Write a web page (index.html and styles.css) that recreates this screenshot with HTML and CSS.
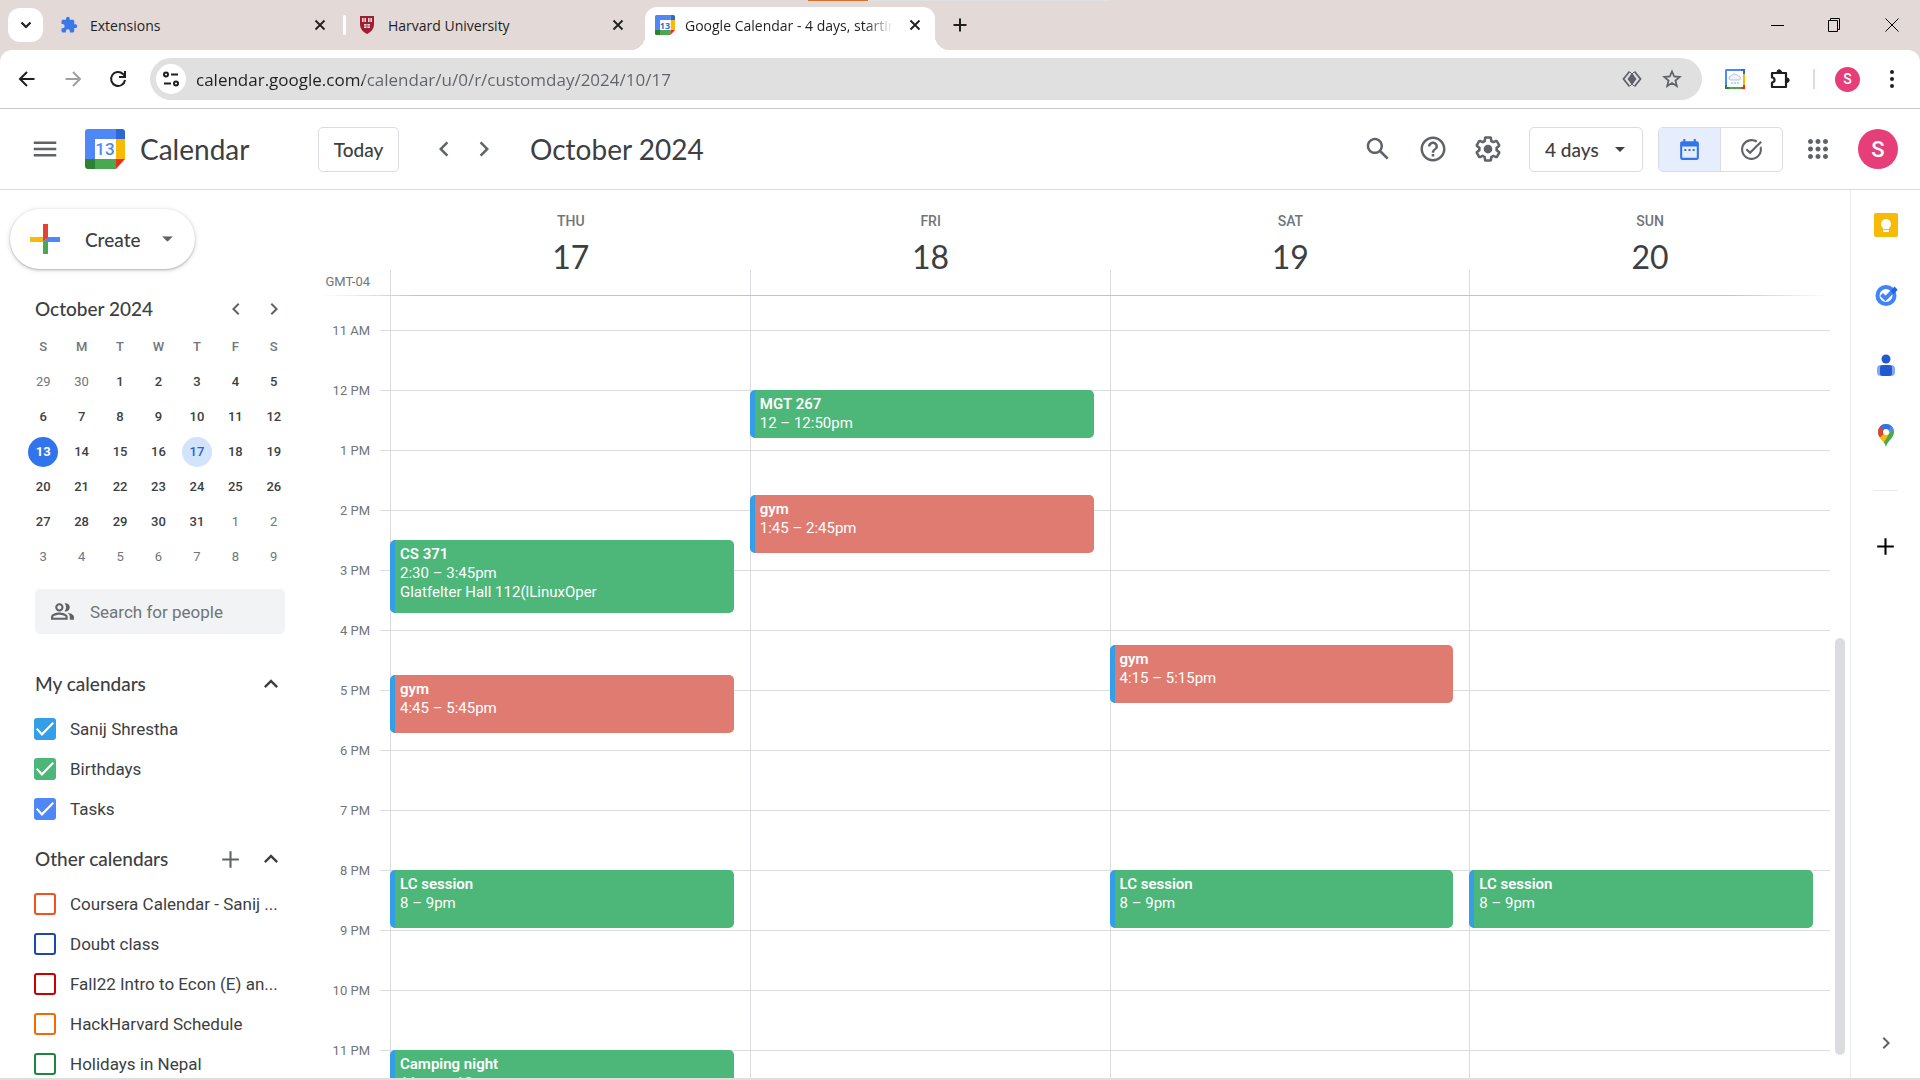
FILE: index.html
```html
<!DOCTYPE html>
<html lang="en">
<head>
    <meta charset="UTF-8">
    <meta name="viewport" content="width=device-width, initial-scale=1.0">
    <title>Google Calendar - 4 days, starting Thursday, October 17, 2024</title>
    <link rel="stylesheet" href="styles.css">
</head>
<body>

    <!-- Shared icons -->
    <svg class="sprite" aria-hidden="true">
        <symbol id="i-close" viewBox="0 0 16 16"><path d="M3.5 3.5l9 9M12.5 3.5l-9 9" fill="none" stroke="currentColor" stroke-width="1.8"/></symbol>
        <symbol id="i-left" viewBox="0 0 24 24"><path d="M15.41 7.41L14 6l-6 6 6 6 1.41-1.41L10.83 12z"/></symbol>
        <symbol id="i-right" viewBox="0 0 24 24"><path d="M10 6L8.59 7.41 13.17 12l-4.58 4.59L10 18l6-6z"/></symbol>
        <symbol id="i-up" viewBox="0 0 24 24"><path d="M12 8l-6 6 1.41 1.41L12 10.83l4.59 4.58L18 14z"/></symbol>
        <symbol id="i-caret" viewBox="0 0 10 5"><path d="M0 0h10L5 5z"/></symbol>
        <symbol id="i-plus" viewBox="0 0 24 24"><path d="M20 13h-7v7h-2v-7H4v-2h7V4h2v7h7v2z"/></symbol>
        <symbol id="i-calendar-logo" viewBox="0 0 40 40">
            <path d="M3 0h28v10H10v20H0V3a3 3 0 0 1 3-3z" fill="#4f87f7"/>
            <path d="M31 0h6a3 3 0 0 1 3 3v7h-9z" fill="#2c67d3"/>
            <path d="M31 10h9v20h-9z" fill="#f7bb07"/>
            <path d="M10 30h21v10H10z" fill="#4aa850"/>
            <path d="M0 30h10v10H3a3 3 0 0 1-3-3z" fill="#2f8132"/>
            <path d="M31 30h9l-9 10z" fill="#ee2c1e"/>
            <path d="M10 10h21v20H10z" fill="#fff"/>
        </symbol>
    </svg>

    <!-- Browser window -->
    <header class="browser">
        <div class="load-bar"></div>
        <div class="tab-strip">
            <button class="tab-search" aria-label="Search tabs">
                <svg width="16" height="16" viewBox="0 0 16 16"><path d="M3.5 5.5L8 10l4.5-4.5" fill="none" stroke="#1f1f1f" stroke-width="2.2"/></svg>
            </button>
            <div class="tab">
                <svg class="favicon" viewBox="0 0 24 24" fill="#3b78e7"><path d="M20.5 11H19V7c0-1.1-.9-2-2-2h-4V3.500a2.500 2.500 0 0 0-5 0V5H4c-1.100 0-2 .9-2 2v3.800h1.500a2.700 2.700 0 0 1 0 5.400H2V20c0 1.100.9 2 2 2h3.800v-1.500a2.700 2.700 0 0 1 5.400 0V22H17c1.100 0 2-.9 2-2v-4h1.500a2.500 2.500 0 0 0 0-5z"/></svg>
                <span class="tab-title">Extensions</span>
                <button class="tab-close" aria-label="Close tab"><svg width="16" height="16"><use href="#i-close"/></svg></button>
            </div>
            <span class="tab-divider"></span>
            <div class="tab">
                <svg class="favicon" viewBox="0 0 18 20">
                    <path d="M2 1h14v8c0 5-3 8-7 10-4-2-7-5-7-10z" fill="#a51c30"/>
                    <g fill="#e9d6d6"><path d="M4 3h4v4H4zM10 3h4v4h-4zM6 9h6v4H6z"/></g>
                    <path d="M6 3v4M12 3v4M9 9v4M6 11h6" stroke="#8d6470" stroke-width="1"/>
                </svg>
                <span class="tab-title">Harvard University</span>
                <button class="tab-close" aria-label="Close tab"><svg width="16" height="16"><use href="#i-close"/></svg></button>
            </div>
            <div class="tab active">
                <span class="favicon-cal"><svg width="20" height="20"><use href="#i-calendar-logo"/></svg><b>13</b></span>
                <span class="tab-title fade">Google Calendar - 4 days, starting</span>
                <button class="tab-close" aria-label="Close tab"><svg width="16" height="16"><use href="#i-close"/></svg></button>
            </div>
            <button class="new-tab" aria-label="New tab"><svg width="16" height="16" viewBox="0 0 16 16"><path d="M8 1.5v13M1.500 8h13" stroke="#1f1f1f" stroke-width="2"/></svg></button>
            <div class="window-buttons">
                <button aria-label="Minimize"><svg width="14" height="14"><path d="M0 7.5h13" stroke="#000"/></svg></button>
                <button aria-label="Restore"><svg width="14" height="14" fill="none" stroke="#000"><path d="M.5 2.500h9v11h-9zM2.500 2V.5h9v11H10"/></svg></button>
                <button aria-label="Close"><svg width="14" height="14"><path d="M.5.5l13 13M13.500.5l-13 13" stroke="#000"/></svg></button>
            </div>
        </div>

        <div class="toolbar">
            <button class="nav" aria-label="Back"><svg width="20" height="20" viewBox="0 0 20 20" fill="none" stroke="#1f1f1f" stroke-width="2"><path d="M17.500 10H4M10 3l-7 7 7 7"/></svg></button>
            <button class="nav" aria-label="Forward"><svg width="20" height="20" viewBox="0 0 20 20" fill="none" stroke="#a0a0a0" stroke-width="2"><path d="M2.500 10H16M10 3l7 7-7 7"/></svg></button>
            <button class="nav" aria-label="Reload"><svg width="20" height="20" viewBox="0 0 20 20" fill="none" stroke="#1f1f1f" stroke-width="2"><path d="M16 11a7 7 0 1 1-2-6l2 2M16 2v6h-6"/></svg></button>
            <div class="address">
                <button class="site-info" aria-label="View site information"><svg width="18" height="18" viewBox="0 0 18 18" fill="none" stroke="#1f1f1f" stroke-width="2"><circle cx="4" cy="4.500" r="2"/><path d="M9 4.500h7M2 13.500h7"/><circle cx="14" cy="13.500" r="2"/></svg></button>
                <input class="url" type="text" aria-label="Address" value="calendar.google.com/calendar/u/0/r/customday/2024/10/17">
                <button class="in-address" aria-label="Hidden content"><svg width="20" height="20" viewBox="0 0 20 20" fill="none" stroke="#5f6368" stroke-width="1.800"><path d="M7.500 2.500L1.500 10l6 7.500M12.500 2.500l6 7.500-6 7.500"/><path d="M10 4l4.500 6-4.500 6-4.500-6z" fill="#5f6368" stroke="none"/><path d="M8 3l4 4M12 3L8 7M8 17l4-4M12 17l-4-4" stroke-width="1"/></svg></button>
                <button class="in-address" aria-label="Bookmark"><svg width="20" height="20" viewBox="0 0 20 20" fill="none" stroke="#5f6368" stroke-width="1.800"><path d="M10 2.500l2.200 5 5.500.5-4.200 3.600 1.300 5.400-4.800-2.900L5.200 17l1.300-5.400L2.300 8l5.500-.5z"/></svg></button>
            </div>
            <button class="tool" aria-label="Weather extension">
                <svg width="20" height="20" viewBox="0 0 20 20"><path d="M1 0h15v2H2v14H0V1z" fill="#4f87f7"/><path d="M16 0h4v5h-2V2h-2z" fill="#2c67d3"/><path d="M18 5h2v11h-2z" fill="#f7bb07"/><path d="M4 18h12v2H4z" fill="#4aa850"/><path d="M0 16h2v2h2v2H0z" fill="#2f8132"/><path d="M18 16h2v4h-4v-2h2z" fill="#ee2c1e"/><path d="M6 11a2 2 0 0 1 0-4 4 4 0 0 1 7 0 2 2 0 0 1 1 4z" fill="#eef1f5" stroke="#b9c3d0"/><path d="M7 13v2M10 13v2M13 13v2" stroke="#5fb4ef"/></svg>
            </button>
            <button class="tool" aria-label="Extensions"><svg width="22" height="22" viewBox="0 0 22 22"><path d="M3 5h14v14H3v-4.500a2.500 2.500 0 0 0 0-5z" fill="none" stroke="#1f1f1f" stroke-width="2.200" stroke-linejoin="round"/><path d="M8 4a2.200 2.200 0 0 1 4.400 0zM18 10a2.200 2.200 0 0 1 0 4.400z" fill="#1f1f1f" stroke="#1f1f1f"/></svg></button>
            <span class="tool-divider"></span>
            <button class="avatar small" aria-label="Profile">S</button>
            <button class="tool" aria-label="Menu"><svg width="20" height="20" viewBox="0 0 20 20" fill="#1f1f1f"><circle cx="10" cy="3" r="2"/><circle cx="10" cy="10" r="2"/><circle cx="10" cy="17" r="2"/></svg></button>
        </div>
    </header>

    <!-- Calendar header -->
    <header class="app-bar">
        <button class="icon-btn" aria-label="Main menu"><svg width="30" height="30" viewBox="0 0 24 24"><path d="M3 18h18v-2H3v2zm0-5h18v-2H3v2zm0-7v2h18V6H3z"/></svg></button>
        <a class="brand" href="#">
            <span class="logo"><svg width="40" height="40"><use href="#i-calendar-logo"/></svg><b>13</b></span>
            <span class="brand-name">Calendar</span>
        </a>
        <button class="today">Today</button>
        <div class="pager">
            <button aria-label="Previous 4 days"><svg width="30" height="30"><use href="#i-left"/></svg></button>
            <button aria-label="Next 4 days"><svg width="30" height="30"><use href="#i-right"/></svg></button>
        </div>
        <h1>October 2024</h1>
        <div class="actions">
            <button class="icon-btn" aria-label="Search"><svg width="30" height="30" viewBox="0 0 24 24"><path d="M20.490 19l-5.730-5.730C15.530 12.200 16 10.910 16 9.500 16 5.910 13.090 3 9.500 3S3 5.910 3 9.500 5.910 16 9.500 16c1.410 0 2.700-.47 3.770-1.240L19 20.490 20.490 19zM5 9.500C5 7.010 7.010 5 9.500 5S14 7.010 14 9.500 11.990 14 9.500 14 5 11.990 5 9.500z"/></svg></button>
            <button class="icon-btn" aria-label="Help"><svg width="30" height="30" viewBox="0 0 24 24"><path d="M11 18h2v-2h-2v2zm1-16C6.480 2 2 6.480 2 12s4.480 10 10 10 10-4.480 10-10S17.520 2 12 2zm0 18c-4.410 0-8-3.590-8-8s3.590-8 8-8 8 3.590 8 8-3.590 8-8 8zm0-14c-2.210 0-4 1.790-4 4h2c0-1.100.9-2 2-2s2 .9 2 2c0 2-3 1.750-3 5h2c0-2.250 3-2.500 3-5 0-2.210-1.790-4-4-4z"/></svg></button>
            <button class="icon-btn" aria-label="Settings"><svg width="30" height="30" viewBox="0 0 24 24"><path d="M13.850 22.250h-3.700c-.74 0-1.360-.54-1.450-1.270l-.27-1.890c-.27-.14-.53-.29-.79-.46l-1.800.72c-.7.26-1.470-.03-1.810-.65L2.200 15.530c-.35-.66-.2-1.440.36-1.880l1.530-1.190c-.01-.15-.02-.3-.02-.46 0-.15.01-.31.02-.46l-1.520-1.190c-.59-.45-.74-1.260-.37-1.880l1.850-3.190c.34-.62 1.110-.9 1.790-.63l1.810.73c.26-.17.52-.32.78-.46l.27-1.910c.09-.7.71-1.250 1.440-1.250h3.700c.74 0 1.360.54 1.450 1.270l.27 1.890c.27.14.53.29.79.46l1.800-.72c.71-.26 1.480.03 1.820.65l1.840 3.180c.36.66.2 1.440-.36 1.880l-1.520 1.190c.01.15.02.3.02.46s-.01.31-.02.46l1.520 1.190c.56.45.72 1.230.37 1.860l-1.860 3.220c-.34.62-1.110.9-1.800.63l-1.800-.72c-.26.17-.52.32-.78.46l-.27 1.910c-.1.68-.72 1.220-1.460 1.220zm-3.230-2h2.760l.37-2.550.53-.22c.44-.18.88-.44 1.340-.78l.45-.34 2.380.96 1.380-2.400-2.030-1.580.07-.56c.03-.26.06-.51.06-.78s-.03-.53-.06-.78l-.07-.56 2.030-1.580-1.390-2.400-2.390.96-.45-.35c-.42-.32-.87-.58-1.330-.77l-.52-.22-.37-2.550h-2.760l-.37 2.550-.53.21c-.44.19-.88.44-1.340.79l-.45.33-2.380-.95-1.390 2.390 2.030 1.580-.07.56a7 7 0 0 0-.06.79c0 .26.02.53.06.78l.07.56-2.030 1.580 1.380 2.400 2.390-.96.45.35c.43.33.86.58 1.330.77l.53.22z"/><circle cx="12" cy="12" r="3.500"/></svg></button>
            <label class="view-picker">
                <select aria-label="View"><option>4 days</option><option>Day</option><option>Week</option><option>Month</option></select>
                <svg width="10" height="5"><use href="#i-caret"/></svg>
            </label>
            <div class="mode">
                <button class="on" aria-label="Switch to Calendar"><svg width="25" height="25" viewBox="0 0 24 24"><path d="M19 4h-1V2h-2v2H8V2H6v2H5c-1.110 0-2 .9-2 2v14c0 1.100.89 2 2 2h14c1.100 0 2-.9 2-2V6c0-1.100-.9-2-2-2zm0 16H5V9h14z"/><path d="M7 11.500h2v2H7zM11 11.500h2v2h-2zM15 11.500h2v2h-2z"/></svg></button>
                <button aria-label="Switch to Tasks"><svg width="25" height="25" viewBox="0 0 24 24"><path d="M22 5.180L10.590 16.600l-4.240-4.240 1.410-1.410 2.830 2.830 10-10L22 5.180zm-2.210 5.040c.13.57.21 1.170.21 1.780 0 4.420-3.580 8-8 8s-8-3.580-8-8 3.580-8 8-8c1.580 0 3.040.46 4.280 1.250l1.440-1.440C16.100 2.670 14.130 2 12 2 6.480 2 2 6.480 2 12s4.480 10 10 10 10-4.480 10-10c0-1.190-.22-2.330-.6-3.390l-1.610 1.610z"/></svg></button>
            </div>
            <button class="icon-btn apps" aria-label="Google apps"><svg width="30" height="30" viewBox="0 0 24 24"><path d="M6 8c1.100 0 2-.9 2-2s-.9-2-2-2-2 .9-2 2 .9 2 2 2zm6 12c1.100 0 2-.9 2-2s-.9-2-2-2-2 .9-2 2 .9 2 2 2zm-6 0c1.100 0 2-.9 2-2s-.9-2-2-2-2 .9-2 2 .9 2 2 2zm0-6c1.100 0 2-.9 2-2s-.9-2-2-2-2 .9-2 2 .9 2 2 2zm6 0c1.100 0 2-.9 2-2s-.9-2-2-2-2 .9-2 2 .9 2 2 2zm4-8c0 1.100.9 2 2 2s2-.9 2-2-.9-2-2-2-2 .9-2 2zm-4 2c1.100 0 2-.9 2-2s-.9-2-2-2-2 .9-2 2 .9 2 2 2zm6 6c1.100 0 2-.9 2-2s-.9-2-2-2-2 .9-2 2 .9 2 2 2zm0 6c1.100 0 2-.9 2-2s-.9-2-2-2-2 .9-2 2 .9 2 2 2z"/></svg></button>
            <button class="avatar" aria-label="Google Account">S</button>
        </div>
    </header>

    <div class="content">

        <!-- Left sidebar -->
        <aside class="sidebar">
            <button class="create">
                <svg width="30" height="30" viewBox="0 0 30 30"><path d="M13 0h5v15h-5z" fill="#e04433"/><path d="M0 13h13v5H0z" fill="#f7bb07"/><path d="M18 13h12v5H18z" fill="#4f87f7"/><path d="M13 18h5v12h-5z" fill="#4aa850"/><path d="M18 13v5h-5z" fill="#4f87f7"/><path d="M13 13h5l-5 5z" fill="#e04433"/></svg>
                <span>Create</span>
                <svg class="create-caret" width="11" height="6" viewBox="0 0 10 5"><use href="#i-caret"/></svg>
            </button>

            <div class="mini-head">
                <h2>October 2024</h2>
                <button aria-label="Previous month"><svg width="24" height="24"><use href="#i-left"/></svg></button>
                <button aria-label="Next month"><svg width="24" height="24"><use href="#i-right"/></svg></button>
            </div>
            <table class="mini">
                <thead>
                    <tr><th>S</th><th>M</th><th>T</th><th>W</th><th>T</th><th>F</th><th>S</th></tr>
                </thead>
                <tbody>
                    <tr><td class="out">29</td><td class="out">30</td><td>1</td><td>2</td><td>3</td><td>4</td><td>5</td></tr>
                    <tr><td>6</td><td>7</td><td>8</td><td>9</td><td>10</td><td>11</td><td>12</td></tr>
                    <tr><td><span class="now">13</span></td><td>14</td><td>15</td><td>16</td><td><span class="picked">17</span></td><td>18</td><td>19</td></tr>
                    <tr><td>20</td><td>21</td><td>22</td><td>23</td><td>24</td><td>25</td><td>26</td></tr>
                    <tr><td>27</td><td>28</td><td>29</td><td>30</td><td>31</td><td class="out">1</td><td class="out">2</td></tr>
                    <tr><td class="out">3</td><td class="out">4</td><td class="out">5</td><td class="out">6</td><td class="out">7</td><td class="out">8</td><td class="out">9</td></tr>
                </tbody>
            </table>

            <label class="people">
                <svg width="25" height="25" viewBox="0 0 24 24"><path fill-rule="evenodd" d="M9 4a4 4 0 1 1 0 8 4 4 0 0 1 0-8zm0 2a2 2 0 1 0 0 4 2 2 0 0 0 0-4zM9 13c2.670 0 8 1.340 8 4v3H1v-3c0-2.660 5.330-4 8-4zm0 2c-2.700 0-5.800 1.290-6 2.010V18h12v-1c-.2-.71-3.300-2-6-2zM14 4.100c.3-.1.700-.1 1-.1a4 4 0 0 1 0 8c-.3 0-.7 0-1-.1a5.900 5.900 0 0 0 0-7.800zM16.700 13.100C19.400 13.500 23 14.800 23 17v3h-4v-3c0-1.700-1-2.900-2.300-3.900z"/></svg>
                <input type="text" placeholder="Search for people" aria-label="Search for people">
            </label>

            <div class="list-head">
                <h3>My calendars</h3>
                <button aria-label="Collapse"><svg width="28" height="28"><use href="#i-up"/></svg></button>
            </div>
            <ul class="calendars">
                <li><label><input class="sky" type="checkbox" checked><span>Sanij Shrestha</span></label></li>
                <li><label><input class="mint" type="checkbox" checked><span>Birthdays</span></label></li>
                <li><label><input class="azure" type="checkbox" checked><span>Tasks</span></label></li>
            </ul>

            <div class="list-head second">
                <h3>Other calendars</h3>
                <button class="add" aria-label="Add other calendars"><svg width="25" height="25"><use href="#i-plus"/></svg></button>
                <button aria-label="Collapse"><svg width="28" height="28"><use href="#i-up"/></svg></button>
            </div>
            <ul class="calendars">
                <li><label><input class="orange" type="checkbox"><span>Coursera Calendar - Sanij ...</span></label></li>
                <li><label><input class="navy" type="checkbox"><span>Doubt class</span></label></li>
                <li><label><input class="red" type="checkbox"><span>Fall22 Intro to Econ (E) an...</span></label></li>
                <li><label><input class="amber" type="checkbox"><span>HackHarvard Schedule</span></label></li>
                <li><label><input class="forest" type="checkbox"><span>Holidays in Nepal</span></label></li>
            </ul>
        </aside>

        <!-- Four day view -->
        <main class="view">
            <div class="day-heads">
                <div class="zone">GMT-04</div>
                <div class="day-head"><span>THU</span><strong>17</strong></div>
                <div class="day-head"><span>FRI</span><strong>18</strong></div>
                <div class="day-head"><span>SAT</span><strong>19</strong></div>
                <div class="day-head"><span>SUN</span><strong>20</strong></div>
            </div>
            <div class="rule"></div>
            <div class="schedule">
                <div class="hours">
                    <span>11 AM</span><span>12 PM</span><span>1 PM</span><span>2 PM</span><span>3 PM</span><span>4 PM</span><span>5 PM</span>
                    <span>6 PM</span><span>7 PM</span><span>8 PM</span><span>9 PM</span><span>10 PM</span><span>11 PM</span>
                </div>
                <!-- one grid row = 5 minutes, row 1 = 11 AM -->
                <div class="days">
                    <div class="day">
                        <div class="event green" style="grid-row: 43 / span 15"><b>CS 371</b><span>2:30 – 3:45pm</span><span>Glatfelter Hall 112(lLinuxOper</span></div>
                        <div class="event coral" style="grid-row: 70 / span 12"><b>gym</b><span>4:45 – 5:45pm</span></div>
                        <div class="event green" style="grid-row: 109 / span 12"><b>LC session</b><span>8 – 9pm</span></div>
                        <div class="event green" style="grid-row: 145 / span 12"><b>Camping night</b><span>11pm – 12am</span></div>
                    </div>
                    <div class="day">
                        <div class="event green" style="grid-row: 13 / span 10"><b>MGT 267</b><span>12 – 12:50pm</span></div>
                        <div class="event coral" style="grid-row: 34 / span 12"><b>gym</b><span>1:45 – 2:45pm</span></div>
                    </div>
                    <div class="day">
                        <div class="event coral" style="grid-row: 64 / span 12"><b>gym</b><span>4:15 – 5:15pm</span></div>
                        <div class="event green" style="grid-row: 109 / span 12"><b>LC session</b><span>8 – 9pm</span></div>
                    </div>
                    <div class="day">
                        <div class="event green" style="grid-row: 109 / span 12"><b>LC session</b><span>8 – 9pm</span></div>
                    </div>
                </div>
                <div class="scroll-track"><div class="scroll-thumb"></div></div>
            </div>
        </main>

        <!-- Right side panel -->
        <nav class="side-panel">
            <button aria-label="Keep"><svg width="24" height="24" viewBox="0 0 24 24"><rect width="24" height="24" rx="2" fill="#f7bb07"/><circle cx="12" cy="11" r="5" fill="#fff"/><path d="M9 13h6v3H9zM9 17h6v2H9z" fill="#fff"/></svg></button>
            <button aria-label="Tasks"><svg width="24" height="24" viewBox="0 0 24 24"><circle cx="12" cy="12.500" r="8.500" fill="none" stroke="#3f84fb" stroke-width="4"/><path d="M7.500 11.500l4 4L22 5" fill="none" stroke="#3f84fb" stroke-width="4"/><path d="M16.500 8l4-4 3 3-4 4z" fill="#2763d6"/></svg></button>
            <button aria-label="Contacts"><svg width="24" height="24" viewBox="0 0 24 24"><rect x="3" y="12" width="18" height="11" rx="4" fill="#82a8f8"/><circle cx="12" cy="6" r="4.500" fill="#2259cf"/><rect x="6" y="12" width="12" height="11" rx="3" fill="#2259cf"/></svg></button>
            <button aria-label="Maps"><svg width="24" height="24" viewBox="0 0 24 24">
                <clipPath id="pin"><path d="M12 1a8 8 0 0 1 8 8c0 6-6 8-8 15-2-7-8-9-8-15a8 8 0 0 1 8-8z"/></clipPath>
                <g clip-path="url(#pin)"><path d="M0 0h24v24H0z" fill="#4aa850"/><path d="M4 16L18 2v4L9 21z" fill="#f7bb07"/><path d="M0 0h8l4 9-8 7z" fill="#e04433"/><path d="M6 4l3-4h15L13 9z" fill="#2f74e8"/><path d="M22 0v6L12 10l6-8z" fill="#4f87f7"/></g>
                <circle cx="12" cy="9" r="3" fill="#fff"/></svg></button>
            <hr>
            <button class="get" aria-label="Get add-ons"><svg width="25" height="25"><use href="#i-plus"/></svg></button>
            <button class="hide" aria-label="Hide side panel"><svg width="24" height="24"><use href="#i-right"/></svg></button>
        </nav>
    </div>
    <div class="window-edge"></div>

</body>
</html>
```
FILE: styles.css
```css
/* General styling */
* {
    box-sizing: border-box;
}

body, html {
    margin: 0;
    height: 100%;
}

body {
    display: flex;
    flex-direction: column;
    overflow: hidden;
    background: #fff;
    color: #3c4043;
    font-family: Roboto, Arial, sans-serif;
    font-size: 17px;
}

button, input, select {
    font: inherit;
    color: inherit;
    border: none;
    background: none;
    padding: 0;
    margin: 0;
    outline: none;
}

button {
    display: flex;
    align-items: center;
    justify-content: center;
    flex-shrink: 0;
    cursor: pointer;
}

svg {
    flex-shrink: 0;
}

svg:not([fill]) {
    fill: currentColor;
}

h1, h2, h3 {
    margin: 0;
    font-family: Lato, sans-serif;
    font-weight: 400;
}

.sprite {
    position: absolute;
    width: 0;
    height: 0;
}

/* Browser tabs */
.browser {
    flex-shrink: 0;
    background: #e3dad7;
    color: #1f1f1f;
    font-family: "Open Sans", sans-serif;
    font-size: 14px;
}

.load-bar {
    position: absolute;
    top: 0;
    left: 42.1%;
    width: 301px;
    height: 1px;
    background: linear-gradient(90deg, #d4722a 60px, #dfe0df 60px);
}

.tab-strip {
    display: flex;
    align-items: center;
    height: 50px;
    padding-left: 8px;
}

.tab-search {
    width: 35px;
    height: 34px;
    margin-right: 8px;
    border-radius: 12px;
    background: #fff;
}

.tab {
    display: flex;
    align-items: center;
    width: 289px;
    padding: 0 12px 0 9px;
}

.tab-divider {
    width: 3px;
    height: 20px;
    margin: 0 3px;
    background: #fff;
    border-radius: 2px;
}

.favicon {
    width: 18px;
    height: 20px;
    margin-right: 12px;
}

.favicon-cal, .logo {
    display: grid;
    place-items: center;
    flex-shrink: 0;
}

.favicon-cal > *, .logo > * {
    grid-area: 1 / 1;
}

.favicon-cal {
    margin-right: 10px;
}

.favicon-cal b {
    color: #2f6fe4;
    font-size: 9px;
}

.tab-title {
    flex: 1;
    overflow: hidden;
    white-space: nowrap;
}

.tab-title.fade {
    -webkit-mask-image: linear-gradient(90deg, #000 180px, transparent 208px);
    mask-image: linear-gradient(90deg, #000 180px, transparent 208px);
}

.tab-close {
    width: 16px;
    height: 16px;
    margin-left: 10px;
}

.tab.active {
    position: relative;
    align-self: flex-end;
    width: 290px;
    height: 43px;
    margin-left: 7px;
    padding: 0 12px 7px 10px;
    border-radius: 12px 12px 0 0;
    background: #fff;
}

/* flared feet of the active tab */
.tab.active::before, .tab.active::after {
    content: "";
    position: absolute;
    bottom: 0;
    width: 14px;
    height: 14px;
}

.tab.active::before {
    right: 100%;
    background: radial-gradient(circle at 0 0, transparent 14px, #fff 14px);
}

.tab.active::after {
    left: 100%;
    background: radial-gradient(circle at 100% 0, transparent 14px, #fff 14px);
}

.new-tab {
    width: 34px;
    height: 34px;
    margin-left: 8px;
}

.window-buttons {
    display: flex;
    margin-left: auto;
}

.window-buttons button {
    width: 57px;
    height: 48px;
}

/* Address bar */
.toolbar {
    display: flex;
    align-items: center;
    height: 59px;
    padding: 0 8px 0 4px;
    background: #fff;
    border-bottom: 1px solid #c8c8c8;
    border-radius: 12px 12px 0 0;
}

.nav {
    width: 46px;
    height: 40px;
}

.address {
    display: flex;
    align-items: center;
    flex: 1;
    height: 42px;
    margin: 0 13px 0 8px;
    padding: 0 10px 0 6px;
    border-radius: 21px;
    background: #e0e0e0;
}

.site-info {
    width: 30px;
    height: 30px;
    margin-right: 10px;
    border-radius: 50%;
    background: #fff;
}

/* host name darker than the rest of the address */
.url {
    flex: 1;
    min-width: 0;
    height: 30px;
    font-size: 17px;
    color: transparent;
    background: linear-gradient(90deg, #1f1f1f 167px, #5f6368 167px);
    -webkit-background-clip: text;
    background-clip: text;
}

.in-address {
    width: 40px;
    height: 40px;
}

.tool {
    width: 40px;
    height: 40px;
}

.tool + .tool {
    margin-left: 5px;
}

.tool-divider {
    width: 2px;
    height: 20px;
    margin: 0 20px 0 13px;
    background: #e3dad7;
}

.avatar {
    width: 40px;
    height: 40px;
    border-radius: 50%;
    background: #e53e78;
    color: #fff;
    font-family: Roboto, sans-serif;
    font-weight: 500;
    font-size: 22px;
}

.avatar.small {
    width: 25px;
    height: 25px;
    margin-right: 12px;
    font-size: 14px;
}

/* Calendar header */
.app-bar {
    display: flex;
    align-items: center;
    flex-shrink: 0;
    height: 81px;
    padding: 0 22px 0 20px;
    border-bottom: 1px solid #dadce0;
}

.icon-btn {
    width: 50px;
    height: 50px;
    color: #5f6368;
}

.brand {
    display: flex;
    align-items: center;
    gap: 15px;
    width: 248px;
    padding-left: 15px;
    color: inherit;
    text-decoration: none;
}

.logo b {
    color: #4f87f7;
    font-size: 17px;
    font-weight: 500;
}

.brand-name, h1 {
    font-family: Lato, sans-serif;
    font-size: 28px;
    line-height: 36px;
}

.today {
    width: 81px;
    height: 45px;
    border: 1px solid #dadce0;
    border-radius: 5px;
    font-family: Lato, sans-serif;
    font-size: 19px;
    font-weight: 500;
}

.pager {
    display: flex;
    margin: 0 26px 0 25px;
    color: #5f6368;
}

.pager button {
    width: 40px;
    height: 40px;
}

.actions {
    display: flex;
    align-items: center;
    margin-left: auto;
}

.actions .icon-btn {
    width: 55px;
}

.actions .apps {
    width: 50px;
    margin: 0 15px 0 10px;
}

.view-picker {
    display: flex;
    align-items: center;
    width: 114px;
    height: 45px;
    margin: 0 15px 0 14px;
    padding: 0 17px 0 15px;
    border: 1px solid #dadce0;
    border-radius: 5px;
}

.view-picker select {
    flex: 1;
    min-width: 0;
    appearance: none;
    font-family: Lato, sans-serif;
    font-size: 19px;
    font-weight: 500;
}

.mode {
    display: flex;
    width: 125px;
    height: 45px;
    border: 1px solid #dadce0;
    border-radius: 5px;
    overflow: hidden;
    color: #5f6368;
}

.mode button {
    flex: 1;
}

.mode .on {
    background: #e6edfd;
    border-right: 1px solid #dadce0;
    color: #3174ec;
}

/* Page columns */
.content {
    display: flex;
    flex: 1;
    min-height: 0;
}

.sidebar {
    flex-shrink: 0;
    width: 320px;
    padding: 19px 27px 0 24px;
    overflow: hidden;
}

.create {
    width: 185px;
    height: 60px;
    margin-left: -14px;
    padding: 0 22px 0 20px;
    justify-content: flex-start;
    border-radius: 30px;
    background: #fff;
    box-shadow: 0 1px 2px rgba(60, 64, 67, 0.3), 0 1px 4px 1px rgba(60, 64, 67, 0.15);
    font-family: Lato, sans-serif;
    font-size: 19px;
    font-weight: 500;
}

.create span {
    margin-left: 25px;
}

.create-caret {
    margin-left: auto;
    color: #5f6368;
}

.mini-head {
    display: flex;
    align-items: center;
    height: 30px;
    margin-top: 25px;
    padding-left: 11px;
}

.mini-head h2, .list-head h3 {
    flex: 1;
    padding-bottom: 2px;
    font-size: 19px;
    font-weight: 500;
}

.mini-head button {
    width: 38px;
    height: 30px;
    color: #5f6368;
}

.mini {
    width: 100%;
    margin-top: 5px;
    border-collapse: collapse;
    table-layout: fixed;
    text-align: center;
    font-size: 13px;
    font-weight: 500;
}

.mini tr {
    height: 35px;
}

.mini td, .mini th {
    padding: 0;
}

.mini th, .mini .out {
    color: #70757a;
    font-weight: 500;
}

.mini .out {
    font-weight: 400;
}

.mini span {
    display: block;
    width: 30px;
    margin: 0 auto;
    line-height: 30px;
    border-radius: 50%;
}

.mini .now {
    background: #3174ec;
    color: #fff;
    font-weight: 700;
}

.mini .picked {
    background: #d2e3fc;
    color: #2f5fc4;
}

.people {
    display: flex;
    align-items: center;
    gap: 15px;
    height: 45px;
    margin: 15px 8px 0 11px;
    padding-left: 15px;
    border-radius: 5px;
    background: #f1f3f4;
    color: #5f6368;
}

.people input {
    flex: 1;
    min-width: 0;
}

.people input::placeholder {
    color: #70757a;
    opacity: 1;
}

.list-head {
    display: flex;
    align-items: center;
    height: 40px;
    margin: 30px 8px 5px 11px;
}

.list-head.second {
    margin-top: 10px;
}

.list-head .add {
    margin-right: 14px;
    color: #5f6368;
}

.calendars {
    margin: 0;
    padding: 0 0 0 10px;
    list-style: none;
}

.calendars label {
    display: flex;
    align-items: center;
    gap: 14px;
    height: 40px;
}

.calendars span {
    white-space: nowrap;
}

.calendars input {
    display: grid;
    place-items: center;
    flex-shrink: 0;
    width: 22px;
    height: 22px;
    appearance: none;
    border: 2px solid currentColor;
    border-radius: 3px;
}

.calendars input:checked {
    background: currentColor;
}

.calendars input:checked::before {
    content: "";
    width: 18px;
    height: 14px;
    background: #fff;
    clip-path: polygon(0 54%, 8% 42%, 33% 76%, 92% 0, 100% 10%, 33% 100%);
}

.sky { color: #359ee8; }
.mint { color: #4db679; }
.azure { color: #4f87f7; }
.orange { color: #f4511e; }
.navy { color: #1c48ae; }
.red { color: #cc0000; }
.amber { color: #ef6c00; }
.forest { color: #1f8640; }

/* Four day view */
.view {
    display: flex;
    flex-direction: column;
    flex: 1;
    min-width: 0;
}

.day-heads {
    display: flex;
    flex-shrink: 0;
    height: 105px;
    padding-right: 21px;
}

.zone {
    display: flex;
    align-items: flex-end;
    justify-content: flex-end;
    width: 70px;
    padding: 0 20px 4px 0;
    font-size: 13px;
    line-height: 18px;
    color: #70757a;
    white-space: nowrap;
}

.day-head {
    flex: 1;
    display: flex;
    flex-direction: column;
    align-items: center;
    padding: 21px 0 0 2px;
    background: linear-gradient(#dadce0, #dadce0) 0 100% / 1px 25px no-repeat;
}

.day-head span {
    font-size: 14px;
    font-weight: 500;
    line-height: 20px;
    color: #70757a;
}

.day-head strong {
    margin-top: 6px;
    font-family: Lato, sans-serif;
    font-size: 32px;
    font-weight: 400;
    line-height: 40px;
}

.rule {
    flex-shrink: 0;
    height: 1px;
    background: linear-gradient(90deg, transparent, #c4c4c4 100px, #c4c4c4 calc(100% - 120px), transparent calc(100% - 20px));
}

.schedule {
    display: flex;
    flex: 1;
    min-height: 0;
    overflow: hidden;
}

.hours {
    flex-shrink: 0;
    width: 60px;
    padding: 5px 10px 0 0;
    color: #70757a;
    font-size: 13px;
    text-align: right;
}

.hours span {
    display: block;
    line-height: 60px;
}

.days {
    display: flex;
    flex: 1;
    padding: 0 1px 0 10px;
    background: linear-gradient(#dadce0 1px, transparent 1px) 0 34px / 100% 60px;
}

.day {
    display: grid;
    grid-auto-rows: 5px;
    flex: 1;
    min-width: 0;
    padding-top: 34px;
    border-left: 1px solid #dadce0;
}

.event {
    display: flex;
    flex-direction: column;
    margin: 0 16px 2px -1px;
    padding: 5px 5px 0;
    border-left: 5px solid #359ee8;
    border-radius: 5px;
    color: #fff;
    font-size: 15px;
    line-height: 19px;
    white-space: nowrap;
    overflow: hidden;
}

.event b {
    font-weight: 600;
}

.event.green { background-color: #4db679; }
.event.coral { background-color: #e07b72; }

.scroll-track {
    display: flex;
    align-items: flex-end;
    justify-content: center;
    width: 20px;
    padding-bottom: 23px;
}

.scroll-thumb {
    width: 10px;
    height: 55%;
    border-radius: 5px;
    background: #dadce0;
}

/* Side panel */
.side-panel {
    display: flex;
    flex-direction: column;
    align-items: center;
    flex-shrink: 0;
    width: 70px;
    border-left: 1px solid #e8eaed;
    color: #5f6368;
}

.side-panel button {
    width: 50px;
    height: 70px;
}

.side-panel hr {
    width: 25px;
    margin: 20px 0;
    border: none;
    border-top: 1px solid #e8eaed;
}

.side-panel .get {
    color: #000;
}

.side-panel .hide {
    margin-top: auto;
}

.window-edge {
    flex-shrink: 0;
    height: 2px;
    background: #dedede;
}
```
